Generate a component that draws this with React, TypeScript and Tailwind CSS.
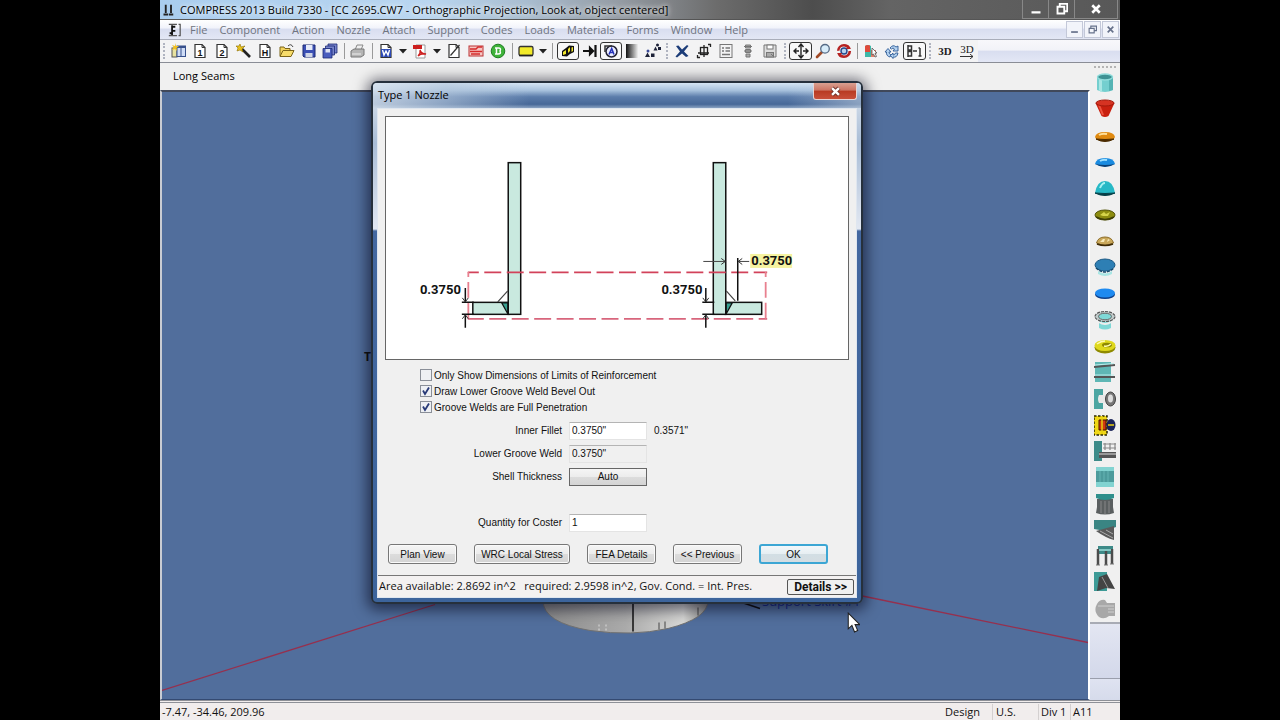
import React from "react";

type IconProps = { children: React.ReactNode; className?: string };

const Icon = ({ children, className = "h-4 w-4" }: IconProps) => (
  <svg viewBox="0 0 16 16" className={`shrink-0 ${className}`} aria-hidden="true">
    {children}
  </svg>
);

const Page = ({ children }: { children?: React.ReactNode }) => (
  <>
    <path d="M3 1.5H10L13 4.5V14.5H3Z" fill="#fff" stroke="#333" strokeWidth="1.2" />
    <path d="M10 1.5V4.5H13" fill="none" stroke="#333" />
    {children}
  </>
);

const Glyph = ({ t, fill = "#111" }: { t: string; fill?: string }) => (
  <text x="8" y="12.5" fontSize="9" fontWeight="900" textAnchor="middle" fill={fill} fontFamily="Liberation Sans, sans-serif">
    {t}
  </text>
);

const fileTools: [string, React.ReactNode][] = [
  ["New vessel", <g key="a"><rect x="1" y="5" width="5" height="9" fill="#e8e2a0" stroke="#555" /><rect x="6" y="3" width="8.500" height="10.500" fill="#cfdcf6" stroke="#37508c" /><path d="M6 4H14" stroke="#37508c" strokeWidth="2" /><path d="M10 5V13" stroke="#37508c" /><path d="M4 0L5 3L8 3L5.500 5L6 8L4 6L1 7L2.500 4L1 2L4 3Z" fill="#f0c020" /></g>],
  ["Division 1", <Page key="b"><Glyph t="1" /></Page>],
  ["Division 2", <Page key="c"><Glyph t="2" /></Page>],
  ["Wizard", <g key="d"><path d="M6 6L14 14" stroke="#222" strokeWidth="2.600" /><path d="M4 1L5 4L9 3L6 6L7 9L4 7L1 8L2 5L0 3L3 3Z" fill="#e9c21a" stroke="#8a6c00" strokeWidth=".6" /></g>],
  ["Heat exchanger", <Page key="e"><Glyph t="H" /></Page>],
  ["Open", <g key="f"><path d="M1 13V4H5L6 5.500H11V8" fill="#f3d35c" stroke="#7b6418" /><path d="M1 13.500L4 7.500H15L12 13.500Z" fill="#f7dc6a" stroke="#7b6418" /><path d="M9 3Q12 0 14 4" fill="none" stroke="#444" /></g>],
  ["Save", <g key="g"><path d="M2 2H14V14H3L2 13Z" fill="#3b4fb4" stroke="#1c2a74" /><rect x="5" y="2" width="6.500" height="5" fill="#e6ebf8" /><rect x="4.500" y="10" width="7" height="4" fill="#cfd5e6" /></g>],
  ["Save all", <g key="h"><path d="M6 1H15V10H6Z" fill="#7683cc" stroke="#1c2a74" strokeWidth=".8" /><path d="M3.500 3H12.500V12H3.500Z" fill="#7683cc" stroke="#1c2a74" strokeWidth=".8" /><path d="M1 5.500H10V15H1Z" fill="#4a5dbe" stroke="#1c2a74" strokeWidth=".8" /><rect x="3.500" y="6" width="4.500" height="3.500" fill="#dde2f4" /></g>],
];

const reportTools: [string, React.ReactNode][] = [
  ["Clear report", <Page key="a"><path d="M4.500 12.500L13.500 2" stroke="#333" strokeWidth="1.200" /></Page>],
  ["Deficiencies", <g key="b"><rect x="1" y="3" width="14" height="10" fill="#f6c6c2" stroke="#b33" /><path d="M2 6H8L10 4H14M2 8.500H14M3 11H12" stroke="#d42a2a" strokeWidth="1.400" fill="none" /></g>],
  ["Run", <g key="c"><circle cx="8" cy="8" r="6.800" fill="#3fb33a" stroke="#1f7d22" /><path d="M5 5H8.500Q11.500 5 10 8Q11.500 11 8 11H5M6.500 5V11" fill="none" stroke="#fff" strokeWidth="1.500" /></g>],
];

const viewTools: [string, React.ReactNode, boolean][] = [
  ["Shaded", <g key="a"><path d="M2 8L6 5L9 2.500L14 3V9L10 11L7 13.500L2 13Z" fill="#111" /><path d="M3 9L6 7V11L3 12ZM8 6L10 4V8L8 10ZM11.500 4.500L13 4V8L11.500 9Z" fill="#f0e62a" /></g>, true],
  ["Nozzle", <path key="b" d="M1 8H11M8 5L11 8L8 11ZM13.500 2V14" fill="#111" stroke="#111" strokeWidth="2.200" />, false],
  ["Labels", <g key="c"><circle cx="8.500" cy="8.500" r="5.500" fill="#e9ecff" stroke="#223" strokeWidth="1.500" /><path d="M2 9V3H9" fill="none" stroke="#333" strokeWidth="1.500" /><path d="M6 11.500L8.700 5.500L11 11.500M7 9.500H10.500" fill="none" stroke="#2733b8" strokeWidth="1.500" /></g>, true],
  ["Background", <g key="d"><defs><linearGradient id="toolGradient"><stop offset="0" stopColor="#111" /><stop offset="1" stopColor="#eee" /></linearGradient></defs><rect x="2" y="1" width="12" height="14" fill="url(#toolGradient)" /></g>, false],
  ["Transform", <g key="e" fill="#1d2238"><path d="M0 14L2.500 9.500L5 14ZM6 14V10.500H9.500V14ZM8.500 7.500L10.500 3.500L12.500 7.500ZM13 7V4H16V7Z" /><circle cx="3" cy="8" r="1.500" fill="#3a4a98" /><circle cx="12.500" cy="2" r="1.500" /></g>, false],
];

const editTools: [string, React.ReactNode][] = [
  ["Delete", <path key="a" d="M2 3L4.500 2.500L8 6.500L13 2L14.500 3L10 8.500L14.500 13L12 14L8 10.500L3 14.500L1.500 13.500L6 8.500Z" fill="#1c3c78" />],
  ["Resize", <g key="b" fill="none" stroke="#222" strokeWidth="1.300"><rect x="4.500" y="4.500" width="7" height="7" /><path d="M8 2V14M2 10H13M1 14.500H4M1.500 12V15M12 1.500H15M14.500 1V4" /></g>],
  ["List", <g key="c" fill="none" stroke="#777"><rect x="2" y="1.500" width="12" height="13" /><path d="M4 5H6M7.500 5H12M4 8H6M7.500 8H12M4 11.500H12" strokeWidth="1.300" /></g>],
  ["Column", <g key="d" fill="#aaa" stroke="#777"><path d="M5.500 2H10.500V5H5.500ZM5.500 6.500H10.500V9.500H5.500ZM6 11H10V14H6ZM4 3.500H12M4 8H12" /></g>],
  ["Save view", <g key="e" stroke="#777"><path d="M2 2H14V14H2Z" fill="#ddd" /><rect x="5" y="2" width="6" height="4" fill="#fff" /><rect x="4.500" y="9.500" width="7" height="4.500" fill="#aaa" /><path d="M9 11L12 14" /></g>],
];

const cameraTools: [string, React.ReactNode, boolean][] = [
  ["Pan", <path key="a" d="M8 1V15M5.500 4L8 1L10.500 4M5.500 12L8 15L10.500 12M1 8H6M3.500 5.500L1 8L3.500 10.500M15 8H10M12.500 5.500L15 8L12.500 10.500" fill="none" stroke="#222" strokeWidth="1.400" />, true],
  ["Zoom", <g key="b"><path d="M2 14L7 9" stroke="#a24a26" strokeWidth="2.600" strokeLinecap="round" /><circle cx="10" cy="5.800" r="4.300" fill="#d7ecfa" stroke="#566b86" strokeWidth="1.300" /></g>, false],
  ["Rotate", <g key="c" fill="none"><circle cx="8" cy="8" r="5.800" stroke="#b52222" strokeWidth="2.600" strokeDasharray="15 3" /><circle cx="8" cy="8" r="3" fill="#b9d3ef" stroke="#23488c" strokeWidth="1.400" /><path d="M12 2L15 6L10 6ZM4 14L1 10L6 10Z" fill="#b52222" /></g>, false],
];

const modelTools: [string, React.ReactNode, boolean][] = [
  ["Select", <g key="a"><path d="M2 3Q5 1 8 3V14H2Z" fill="#3fb8a8" /><path d="M2 3Q4 1.500 7 2.500V9H2Z" fill="#e04a3a" /><rect x="8" y="7" width="5" height="7" fill="#e0806a" /><path d="M9 5L14 10H12L13.500 13.500L12 14L10.500 11L9 12Z" fill="#fff" stroke="#555" strokeWidth=".8" /></g>, false],
  ["Refresh", <g key="b" fill="#b4d2f0" stroke="#2c5a96" strokeWidth=".9"><path d="M6 5Q9 1 12 4L14 3V8H9L10.500 6Q9 4 7.500 6Z" /><path d="M1 9L4 5.500L7 9H5Q5 11 7 12L6 14Q2 13 2.500 9Z" /><path d="M14 10Q13 15 9 14V15.500L6.500 12.500L9 10V12Q11 12 11.500 10Z" /></g>, false],
  ["Dimension", <g key="c" fill="none" stroke="#333" strokeWidth="1.500"><path d="M2 2V14M2 3H5.500V7H2M2 8.500H5.500V13H2M7 8H11M14 5V13M12.500 5H14M12.500 13H15.500" /></g>, true],
];

const ToolButton = ({ name, active, children }: { name: string; active?: boolean; children: React.ReactNode }) => (
  <button
    type="button"
    aria-label={name}
    className={`flex h-[18px] min-w-0 flex-1 items-center justify-center rounded-[3px] ${active ? "border border-[#333] bg-[#f8f8f8]" : ""}`}
  >
    {children}
  </button>
);

const Sep = () => (
  <span className="flex w-[6px] justify-center">
    <span className="h-4 w-px bg-[#9a9a9a]" />
  </span>
);

const Grip = () => (
  <span className="flex w-2 justify-center">
    <span className="h-4 border-l-2 border-dotted border-[#b0b4c0]" />
  </span>
);

const Caret = ({ name }: { name: string }) => (
  <button type="button" aria-label={name} className="flex h-[18px] w-3 items-center justify-center">
    <svg viewBox="0 0 8 5" className="h-[5px] w-2" aria-hidden="true"><path d="M0 0H8L4 4.500Z" fill="#222" /></svg>
  </button>
);

const shapes: [string, React.ReactNode][] = [
  ["Cylinder", <g key="1"><path d="M3 5V18Q11 22 19 18V5Z" fill="#74cfcf" /><path d="M5 5V18Q6 20 8 20V7Z" fill="#a9e6e4" /><path d="M15 6V19L19 18V5Z" fill="#55b3b4" /><ellipse cx="11" cy="5" rx="7.500" ry="3" fill="#3d9294" stroke="#8fdcdb" strokeWidth="1.500" /></g>],
  ["Cone", <g key="2"><path d="M1.500 5L7.500 18Q11 20 14.500 18L20.500 5Z" fill="#c9200f" /><path d="M5 7L9 17" stroke="#ee5440" strokeWidth="2" /><ellipse cx="11" cy="5" rx="9" ry="3" fill="#d63322" stroke="#a31a0c" /></g>],
  ["Torispherical head", <g key="3"><path d="M1 12Q2 7 11 7Q20 7 21 12Q20 16 11 16Q2 16 1 12Z" fill="#e08a10" /><path d="M2 14Q11 19 20 14Q11 15 2 14" stroke="#4a2a00" fill="#4a2a00" /><path d="M5 10Q8 8 13 9" stroke="#ffe09a" strokeWidth="2" fill="none" /></g>],
  ["Ellipsoidal head", <g key="4"><path d="M1 13Q2 7 11 7Q20 7 21 13Q11 18 1 13Z" fill="#1a8be0" /><path d="M1 13Q11 19 21 13Q11 15 1 13" fill="#0b3f74" /><path d="M6 10Q9 8 13 9" stroke="#9fe0ff" strokeWidth="2" fill="none" /></g>],
  ["Hemispherical head", <g key="5"><path d="M1 16Q3 4 11 4Q19 4 21 16Q11 20 1 16Z" fill="#27b9c6" /><path d="M1 16Q11 21 21 16Q11 17 1 16" fill="#063e46" stroke="#063e46" /><path d="M6 11Q8 6 11 6" stroke="#a6f2f2" strokeWidth="2" fill="none" /></g>],
  ["F&D head", <g key="6"><ellipse cx="11" cy="11" rx="10" ry="5" fill="#8d8d10" stroke="#55550a" /><path d="M6 11L10 8L12 10L16 8L14 12L9 12Z" fill="#d5d44a" /><path d="M2 13Q11 18 20 13" fill="none" stroke="#3f3f06" strokeWidth="1.500" /></g>],
  ["Toriconical head", <g key="7"><path d="M2.500 13Q4 7 11 7Q18 7 19.500 13Q15 15 11 15Q6 15 2.500 13Z" fill="#c9a75a" stroke="#8d6d28" /><path d="M6 12L9 9H11L10 12ZM13 12L14 9L16 10Z" fill="#f7e9b8" /><path d="M3 14Q11 17 19 14" stroke="#3d2a06" strokeWidth="1.600" fill="none" /></g>],
  ["Bolted cover", <g key="8"><path d="M4 15Q11 20 18 15V18Q11 22 4 18Z" fill="#a9e6e4" /><ellipse cx="11" cy="9" rx="10" ry="6" fill="#2e7fb4" stroke="#1b5a86" /><path d="M2 12Q11 20 20 12" fill="none" stroke="#15486c" strokeWidth="1.500" strokeDasharray="3 1" /></g>],
  ["Flat head", <g key="9"><ellipse cx="11" cy="12.500" rx="10" ry="4.500" fill="#0d3d86" /><ellipse cx="11" cy="11" rx="10" ry="4.500" fill="#1e8af0" /></g>],
  ["Body flange", <g key="10"><path d="M5 10V19Q11 22 17 19V10Z" fill="#7fd8d6" /><path d="M5 13Q11 17 17 13" stroke="#eee" strokeWidth="2" fill="none" /><ellipse cx="11" cy="7.500" rx="10" ry="5" fill="#c2cccc" stroke="#555" strokeWidth="1.200" strokeDasharray="3 1" /><ellipse cx="11" cy="7.500" rx="6.500" ry="3.300" fill="#7fd8d6" stroke="#666" /></g>],
  ["Ring flange", <g key="11"><ellipse cx="11" cy="12.500" rx="10.500" ry="6" fill="#8f8a00" /><ellipse cx="11" cy="10.500" rx="10.500" ry="5.500" fill="#dfd81c" /><ellipse cx="13" cy="10" rx="5" ry="2.300" fill="#8d8800" /><path d="M3 9Q7 6 11 6M10 11Q14 12 17 9" stroke="#fffbb0" strokeWidth="1.500" fill="none" /></g>],
  ["Stiffener rings", <g key="12"><path d="M1 1H17V21H1Z" fill="#5fb7b5" /><path d="M0 6L21 4M0 16L21 16" stroke="#555" strokeWidth="2" /><path d="M1 4L20 2.500M1 14H20" stroke="#bdeeec" /></g>],
  ["Nozzle", <g key="13"><path d="M0 1H9V21H0Z" fill="#4ba5a2" /><path d="M5 7H14V15H5Q3 11 5 7Z" fill="#e8e8e8" /><ellipse cx="16.500" cy="11" rx="5" ry="7" fill="#777" stroke="#444" /><ellipse cx="16.500" cy="10.500" rx="2.500" ry="4" fill="#ddd" /></g>],
  ["Clip", <g key="14"><path d="M0 2H13V21H0Z" fill="#f0d818" stroke="#2a2600" strokeWidth="1.500" strokeDasharray="2.500 1.500" /><path d="M5 6H12V16H5Z" fill="#d13b12" stroke="#4b1000" /><ellipse cx="17" cy="11" rx="4.500" ry="6" fill="#1a2358" /><path d="M14 11H20M8 2V20" stroke="#e8d010" strokeWidth="1.500" /></g>],
  ["Piping", <g key="15"><path d="M0 1H8V21H0Z" fill="#3c8a88" /><path d="M5 12H22V18H5Z" fill="#555" /><path d="M9 4H22M9 8H22M11 3V10M16 3V10M21 3V10" stroke="#888" strokeWidth="1.200" /><path d="M5 14H22" stroke="#ddd" /></g>],
  ["Platform", <g key="16"><path d="M2 1H20V21H2Z" fill="#82d3d1" /><path d="M2 5H20V16H2Z" fill="#4d9b9c" /><path d="M6 5V16M10 5V16M14 5V16" stroke="#66b4b4" /></g>],
  ["Skirt", <g key="17"><path d="M3 6H19V14L20 20Q11 23 2 20L3 14Z" fill="#5b5f60" /><path d="M2 1H20V5Q11 9 2 5Z" fill="#2f8f8c" /><path d="M7 8V20M11 8V21M15 8V20" stroke="#888" /></g>],
  ["Saddle", <g key="18"><path d="M0 1H22V8L11 12L0 10Z" fill="#3a8583" /><path d="M2 12L20 7V21Q12 19 2 12Z" fill="#5a5a5a" /><path d="M6 12L19 19M12 11L19 15" stroke="#aaa" /></g>],
  ["Legs", <g key="19"><path d="M4 1H19V9H4Z" fill="#3d8a88" /><path d="M4 4V20M12 6V20M18 4V19" stroke="#4c4c4c" strokeWidth="2.500" /><path d="M2 20H6M10 20H14M16 19H20" stroke="#777" /><path d="M5 5H17" stroke="#9cdcda" strokeWidth="1.500" /></g>],
  ["Lug", <g key="20"><path d="M0 1H13V20H0Z" fill="#3d9a96" /><path d="M5 6L13 3L21 18L12 17L3 20Z" fill="#444" /><path d="M8 6L14 17" stroke="#999" /></g>],
  ["Custom", <g key="21"><path d="M3 6Q6 1 11 2L13 5H21V18H15Q10 22 5 19Q-1 13 3 6Z" fill="#a8a8a8" /><path d="M4 8H20M14 11H20M14 14H20" stroke="#cfcfcf" /></g>],
];

const menus = ["File", "Component", "Action", "Nozzle", "Attach", "Support", "Codes", "Loads", "Materials", "Forms", "Window", "Help"];

const TitleBar = () => (
  <header className="flex h-5 items-center border-b border-[#555] bg-[linear-gradient(90deg,#a9cdee_0%,#b9d6f0_28%,#a9bdd0_38%,#949ba3_48%,#6c6c6c_58%,#4d4d4d_68%,#646464_76%,#585858_100%)]">
    <Icon className="ml-[2px] h-4 w-3"><path d="M5 1V12M12 1V12M2 14H8M9 14H15" stroke="#222" strokeWidth="2.500" fill="none" /></Icon>
    <h1 className="ml-[6px] flex-1 truncate text-[11px] leading-5 text-black [text-shadow:0_0_5px_#fff,0_0_8px_#ffffffb0]">
      COMPRESS 2013 Build 7330 - [CC 2695.CW7 - Orthographic Projection, Look at, object centered]
    </h1>
    <div className="mr-[2px] flex h-full items-stretch text-white">
      {["Minimize", "Restore", "Close"].map((n, i) => (
        <button key={n} type="button" aria-label={n} className={`flex items-center justify-center border-b border-l border-[#888] ${i === 2 ? "w-11 border-r" : "w-[26px]"}`}>
          <Icon className="h-3 w-3">
            {i === 0 && <path d="M2 11H14V14H2Z" fill="#fff" />}
            {i === 1 && <path d="M5 4V1H15V11H12M2 5H11V14H2Z" fill="none" stroke="#fff" strokeWidth="2.500" />}
            {i === 2 && <path d="M3 3L13 13M13 3L3 13" stroke="#fff" strokeWidth="3.500" />}
          </Icon>
        </button>
      ))}
    </div>
  </header>
);

const MenuBar = () => (
  <nav className="flex h-[19px] items-center bg-[linear-gradient(#ffffff_0%,#f2f4fb_40%,#d9def0_50%,#e3e7f5_100%)] pl-2">
    <Icon className="mr-[9px] h-[14px] w-[13px]"><path d="M1 1H11M1 15H11M13 1H15V15H13" stroke="#555" strokeWidth="1.500" fill="none" /><path d="M5 2V14M5 4H9M5 9H9M2 12H5" stroke="#111" strokeWidth="2.200" /></Icon>
    <ul className="flex gap-3 text-[11px] leading-[18px] text-[#6f7480]">
      {menus.map((m) => (
        <li key={m}><button type="button">{m}</button></li>
      ))}
    </ul>
    <div className="ml-auto flex h-[17px] gap-px pr-px">
      {["Minimize document", "Restore document", "Close document"].map((n, i) => (
        <button key={n} type="button" aria-label={n} className="flex w-[17px] items-center justify-center border border-[#c3c8d8] bg-[#f2f4fa]">
          <Icon className="h-[9px] w-[9px]">
            {i === 0 && <path d="M2 11H14V14H2Z" fill="#66718a" />}
            {i === 1 && <path d="M5 5V2H15V10H12M2 6H11V14H2Z" fill="none" stroke="#66718a" strokeWidth="2" />}
            {i === 2 && <path d="M3 3L13 13M13 3L3 13" stroke="#66718a" strokeWidth="3" />}
          </Icon>
        </button>
      ))}
    </div>
  </nav>
);

const Toolbar = () => (
  <div role="toolbar" aria-label="Standard" className="flex h-6 items-center border-y border-t-[#a9adba] border-b-[#8a8d96] bg-[linear-gradient(#f8f8fb_0%,#f2f3f8_45%,#d9def0_52%,#e3e7f5_100%)]">
    <div className="flex h-full items-center bg-[#f3f3f4]">
      <Grip />
      <div className="flex w-[173px]">{fileTools.map(([n, g]) => <ToolButton key={n} name={n}><Icon>{g}</Icon></ToolButton>)}</div>
      <Sep />
      <div className="flex w-[22px]">
        <ToolButton name="Print"><Icon><path d="M5 7L7 2H13L11 7Z" fill="#eee" stroke="#888" /><path d="M1 8L4 6H14V12L11 14H1Z" fill="#b5b5b5" stroke="#777" /><path d="M2 11H11" stroke="#eee" /></Icon></ToolButton>
      </div>
      <Sep />
      <div className="flex w-[22px]">
        <ToolButton name="Word report"><Icon><Page><path d="M3 6H13V14H3Z" fill="#2c49b5" /><path d="M4.500 7L6 12L8 8L10 12L11.500 7" fill="none" stroke="#fff" strokeWidth="1.400" /></Page></Icon></ToolButton>
      </div>
      <Caret name="Word options" />
      <div className="flex w-[22px]">
        <ToolButton name="PDF report"><Icon><path d="M4 2H13V15H4Z" fill="#fff" stroke="#999" /><path d="M1 2H10V6H1Z" fill="#cc1f1f" /><path d="M6 13Q9 10 8 7Q9 11 14 11Q9 10 6 13" fill="none" stroke="#cc1f1f" strokeWidth="1.400" /></Icon></ToolButton>
      </div>
      <Caret name="PDF options" />
      <div className="flex w-[66px]">{reportTools.map(([n, g]) => <ToolButton key={n} name={n}><Icon>{g}</Icon></ToolButton>)}</div>
      <Sep />
      <div className="flex w-[22px]">
        <ToolButton name="Component color"><Icon><rect x="1" y="3.500" width="14" height="9" rx="1.500" fill="#f2ea2a" stroke="#333" strokeWidth="1.300" /><path d="M1 12.500H15" stroke="#222" strokeWidth="1.500" /></Icon></ToolButton>
      </div>
      <Caret name="Color options" />
      <Sep />
      <div className="ml-[2px] flex w-[106px]">{viewTools.map(([n, g, a]) => <ToolButton key={n} name={n} active={a}><Icon>{g}</Icon></ToolButton>)}</div>
      <Grip />
      <div className="flex w-[110px]">{editTools.map(([n, g]) => <ToolButton key={n} name={n}><Icon>{g}</Icon></ToolButton>)}</div>
      <Grip />
      <div className="flex w-[65px]">{cameraTools.map(([n, g, a]) => <ToolButton key={n} name={n} active={a}><Icon>{g}</Icon></ToolButton>)}</div>
      <Sep />
      <div className="flex w-[66px]">{modelTools.map(([n, g, a]) => <ToolButton key={n} name={n} active={a}><Icon>{g}</Icon></ToolButton>)}</div>
      <Grip />
      <div className="flex w-[44px] font-['Liberation_Serif',serif] text-[11px] font-bold leading-3 text-[#222]">
        <ToolButton name="3D">3D</ToolButton>
        <ToolButton name="3D export">
          <span className="flex flex-col items-center font-normal">
            <span className="leading-[10px]">3D</span>
            <svg viewBox="0 0 14 5" className="h-[5px] w-[14px]" aria-hidden="true"><path d="M0 2.500H13M10 0L13 2.500L10 5" fill="none" stroke="#333" /></svg>
          </span>
        </ToolButton>
      </div>
    </div>
  </div>
);

const Scene = () => (
  <svg viewBox="162 91 926 608" preserveAspectRatio="xMidYMid slice" className="absolute inset-0 h-full w-full" aria-hidden="true">
    <defs>
      <linearGradient id="vessel"><stop offset="0" stopColor="#8b8b8b" /><stop offset=".5" stopColor="#aaaaaa" /><stop offset=".85" stopColor="#d8d8d6" /><stop offset="1" stopColor="#8a8a88" /></linearGradient>
    </defs>
    <path d="M162 690L435 604" stroke="#96304e" strokeWidth="1.300" />
    <path d="M860 595L1088 642" stroke="#96304e" strokeWidth="1.300" />
    <path d="M543 600Q543 622 590 630Q632 636 668 628Q708 618 708 600Z" fill="url(#vessel)" stroke="#707070" />
    <path d="M633 600V631" stroke="#111" strokeWidth="1.500" />
    <path d="M599 624V630M606 624V630" stroke="#ddd" strokeDasharray="2 2" />
    <path d="M659 622V629M665 621V628M698 607V615" stroke="#444" />
    <path d="M742 602L760 608" stroke="#111" strokeWidth="1.500" />
    <text x="364" y="360" fontSize="12" fontWeight="700" fill="#111">Top</text>
    <text x="762" y="605" fontSize="13" fill="#1b2f8c">Support Skirt #1</text>
  </svg>
);

const arrowPaths = { d: "M-3 -4L0 0L3 -4", u: "M-3 4L0 0L3 4", r: "M-4 -3L0 0L-4 3", l: "M4 -3L0 0L4 3" };

const Arrow = ({ x, y, d }: { x: number; y: number; d: "u" | "d" | "l" | "r" }) => (
  <path d={arrowPaths[d]} transform={`translate(${x} ${y})`} fill="none" stroke="#333" />
);

const NozzleDrawing = () => (
  <svg viewBox="386 117 463 242" className="block h-[242px] w-full" role="img" aria-label="Nozzle weld cross section">
    <rect x="751" y="254" width="42" height="14" fill="#f6f3a0" />
    <g fill="#c9e9df" stroke="#111" strokeWidth="1.500">
      <rect x="473" y="302.500" width="36" height="12" />
      <rect x="508.500" y="162.500" width="12.500" height="152" />
      <rect x="726" y="302.500" width="36.500" height="12" />
      <rect x="714" y="162.500" width="12.500" height="152" />
    </g>
    <path d="M502 303L508 314V303Z" fill="#38a090" stroke="#111" strokeWidth="1.200" />
    <path d="M733 303L727 314V303Z" fill="#38a090" stroke="#111" strokeWidth="1.200" />
    <path d="M498 302L508 291M727 291L736 301" stroke="#444" strokeWidth="1.200" />
    <g stroke="#d2425a" strokeWidth="1.800" fill="none">
      <path d="M468 272.500H768" strokeDasharray="17 5.500" strokeDashoffset="6" />
      <path d="M468 319H768" strokeDasharray="17 5.500" strokeDashoffset="1" stroke="#d8657c" />
      <path d="M468.500 272V319M766.500 272V319" strokeDasharray="16 5" strokeDashoffset="11" stroke="#e8808f" />
    </g>
    <path d="M462 302.500H474M462 314.500H474M703 302.500H715M703 314.500H715M465.500 288V302M465.500 315V328M706.500 288V302M706.500 315V328M738.500 258V301" stroke="#111" strokeWidth="1.500" />
    <path d="M704 261.500H726M739 261.500H750" stroke="#444" />
    <Arrow x={465.5} y={302} d="d" />
    <Arrow x={465.5} y={315} d="u" />
    <Arrow x={706.5} y={302} d="d" />
    <Arrow x={706.5} y={315} d="u" />
    <Arrow x={726} y={261.5} d="r" />
    <Arrow x={739} y={261.5} d="l" />
    <g fontFamily="Roboto, sans-serif" fontSize="13" fontWeight="700" fill="#111">
      <text x="420" y="294">0.3750</text>
      <text x="662" y="294">0.3750</text>
      <text x="752" y="265">0.3750</text>
    </g>
  </svg>
);

const checks: [string, boolean][] = [
  ["Only Show Dimensions of Limits of Reinforcement", false],
  ["Draw Lower Groove Weld Bevel Out", true],
  ["Groove Welds are Full Penetration", true],
];

const inputStyle = "h-[18px] w-[78px] border border-[#e4e4e4] border-t-[#b4b4b4] px-[2px]";
const buttonStyle = "h-5 rounded-[3px] border border-[#777] bg-[linear-gradient(#f5f5f5_0%,#ececec_50%,#dcdcdc_51%,#d4d4d4_100%)] shadow-[inset_0_0_0_1px_#fafafa]";

const NozzleDialog = () => {
  const [state, setState] = React.useState(checks.map((c) => c[1]));
  return (
    <section
      role="dialog"
      aria-labelledby="dialog-title"
      className="absolute left-[211px] top-[81px] w-[492px] rounded-[6px] border-2 border-[#26303c] bg-[linear-gradient(#dfe7f0_0px,#a9bdd6_60px,#e2e8f2_146px,#4468a0_148px,#3c649c_100%)] px-1 pb-1 shadow-[0_2px_14px_4px_rgba(0,0,20,0.55)]"
    >
      <div className="-mx-1 flex h-[25px] items-center rounded-t-[4px] bg-[linear-gradient(90deg,#d9e3eecc_0%,#b7c9dd99_15%,#5070a000_32%,#5070a000_85%,#c5d3e288_100%),linear-gradient(#d5e5f4_0%,#a6c0dc_30%,#5c7dab_55%,#476898_85%,#8aa2c2_100%)] pl-[5px]">
        <h2 id="dialog-title" className="flex-1 text-[11px] text-black">Type 1 Nozzle</h2>
        <button type="button" aria-label="Close dialog" className="mr-1 flex h-[17px] w-11 items-center justify-center self-start rounded-b-[3px] border border-t-0 border-[#e6d4d4] bg-[linear-gradient(#d9a091_0%,#cc7463_45%,#b83a22_50%,#c84f3a_100%)]">
          <Icon className="h-[11px] w-[11px]"><path d="M3 3L13 13M13 3L3 13" stroke="#6d3028" strokeWidth="6" /><path d="M3 3L13 13M13 3L3 13" stroke="#fff" strokeWidth="3.500" /></Icon>
        </button>
      </div>
      <div className="border border-[#dfe6ef] bg-[#f0f0f0] font-['Liberation_Sans',sans-serif] text-[10px] text-[#111]">
        <div className="mx-[7px] mt-[7px] border border-[#666] bg-white">
          <NozzleDrawing />
        </div>
        <div className="ml-[42px] mt-[7px]">
          {checks.map(([label], i) => (
            <label key={label} className="flex h-4 w-fit items-center gap-[2px]">
              <span className="grid h-3 w-3 place-items-center">
                <input
                  type="checkbox"
                  checked={state[i]}
                  onChange={() => setState(state.map((v, j) => (j === i ? !v : v)))}
                  className="peer col-start-1 row-start-1 h-3 w-3 appearance-none border border-[#8a8f98] bg-[#eef0f4]"
                />
                <svg viewBox="0 0 10 10" className="pointer-events-none invisible col-start-1 row-start-1 h-[10px] w-[10px] peer-checked:visible" aria-hidden="true">
                  <path d="M2 4.500L4 8L8 1.500" fill="none" stroke="#283a78" strokeWidth="1.800" />
                </svg>
              </span>
              {label}
            </label>
          ))}
        </div>
        <div className="mt-1 grid auto-rows-[23px] grid-cols-[184px_78px_auto] items-center gap-x-[7px]">
          <label htmlFor="inner" className="text-right">Inner Fillet</label>
          <input id="inner" defaultValue={'0.3750"'} className={`${inputStyle} bg-white`} />
          <span>0.3571"</span>
          <label htmlFor="lower" className="text-right">Lower Groove Weld</label>
          <input id="lower" readOnly value={'0.3750"'} className={`${inputStyle} bg-[#f0f0f0]`} />
          <span />
          <label htmlFor="shell" className="text-right">Shell Thickness</label>
          <button id="shell" type="button" className="h-[18px] border border-[#666] bg-[linear-gradient(#f5f5f5_0%,#ececec_50%,#dcdcdc_51%,#d4d4d4_100%)]">Auto</button>
          <span />
          <label htmlFor="quantity" className="row-start-5 text-right">Quantity for Coster</label>
          <input id="quantity" defaultValue="1" className={`${inputStyle} row-start-5 bg-white`} />
        </div>
        <div className="ml-[10px] mt-[10px] flex gap-[17px]">
          <button type="button" className={`${buttonStyle} w-[69px]`}>Plan View</button>
          <button type="button" className={`${buttonStyle} w-24`}>WRC Local Stress</button>
          <button type="button" className={`${buttonStyle} w-[69px]`}>FEA Details</button>
          <button type="button" className={`${buttonStyle} w-[69px]`}>&lt;&lt; Previous</button>
          <button type="button" className="h-5 w-[69px] rounded-[3px] border-2 border-[#3ca6d4] bg-[linear-gradient(#f2f7fa_0%,#e6eef2_50%,#d2dee4_51%,#d4dde2_100%)]">OK</button>
        </div>
        <footer className="mt-[11px] flex h-[22px] items-center border-t border-[#777] bg-[#f3f1f1] pl-px pr-[2px] font-['Open_Sans',sans-serif] text-[11px]">
          <p className="flex-1 whitespace-pre">Area available: 2.8692 in^2   required: 2.9598 in^2, Gov. Cond. = Int. Pres.</p>
          <button type="button" className="h-4 w-[67px] rounded-[2px] border border-[#555] bg-[#f0f0f0] font-['Roboto',sans-serif] text-[12px] font-bold leading-[14px]">Details &gt;&gt;</button>
        </footer>
      </div>
    </section>
  );
};

const ShapeBar = () => (
  <aside aria-label="Components" className="flex w-[30px] flex-col bg-[#f0f0f0]">
    <div className="mx-1 mt-[3px] h-1 border-t-2 border-dotted border-[#b4b4b4]" />
    <div className="flex h-[552px] flex-col">
      {shapes.map(([name, art]) => (
        <button key={name} type="button" aria-label={name} className="flex min-h-0 flex-1 items-center justify-center">
          <svg viewBox="0 0 22 22" className="h-[22px] w-[22px]" aria-hidden="true">{art}</svg>
        </button>
      ))}
    </div>
    <div className="h-14 border-t-2 border-[#a8abb4] bg-[linear-gradient(#e3e6f2,#d3d8ea)]" />
    <div className="flex-1 border-t border-[#9a9eac] bg-[linear-gradient(#dfe3f1,#d6dbeb)]" />
  </aside>
);

export default function App() {
  return (
    <div className="flex min-h-screen justify-center bg-black">
      <main className="relative flex w-3/4 flex-col overflow-hidden bg-[#f0f0f0] font-['Open_Sans',sans-serif]">
        <TitleBar />
        <MenuBar />
        <Toolbar />
        <div className="flex flex-1">
          <div className="flex min-w-0 flex-1 flex-col">
            <p className="flex h-[27px] items-center pl-[13px] text-[11px] text-black">Long Seams</p>
            <div className="relative flex-1 border-2 border-b-[1px] border-[#c9ccd2] border-r-white border-t-[#40485a] border-b-[#344a72] bg-[#516e9c]">
              <Scene />
            </div>
          </div>
          <ShapeBar />
        </div>
        <footer className="flex h-5 items-center border-t-[3px] border-double border-[#8e9097] bg-[#f1eded] pl-[2px] text-[11px] leading-4 text-[#111]">
          <span className="flex-1">-7.47, -34.46, 209.96</span>
          <span className="w-[47px]">Design</span>
          <span className="w-[46px] border-l border-[#d4d0d0] pl-[3px]">U.S.</span>
          <span className="w-8 border-l border-[#d4d0d0] pl-[2px]">Div 1</span>
          <span className="w-[50px] border-l border-[#d4d0d0] pl-[2px]">A11</span>
        </footer>
        <NozzleDialog />
        <svg viewBox="0 0 12 20" className="absolute left-[687px] top-[612px] h-[21px] w-[13px]" aria-hidden="true">
          <path d="M1 1V16L4.500 12.800L7 19L10 17.700L7.500 12H12Z" fill="#fff" stroke="#222" />
        </svg>
      </main>
    </div>
  );
}
